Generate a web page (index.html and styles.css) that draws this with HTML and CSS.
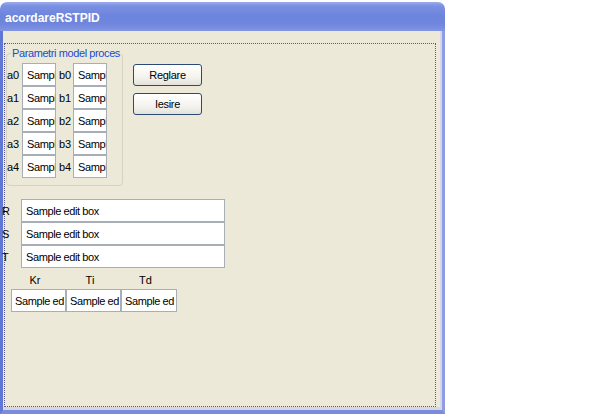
FILE: index.html
```html
<!DOCTYPE html>
<html>
<head>
<meta charset="utf-8">
<link rel="stylesheet" href="styles.css">
</head>
<body>
<div class="window">
  <div class="titlebar">acordareRSTPID</div>
  <div class="client">
    <div class="frame">
      <div class="top">
        <div class="group">
          <span class="legend">Parametri model proces</span>
          <div class="params">
            <span class="lbl">a0</span><div class="edit small">Sample</div><span class="lbl lb">b0</span><div class="edit small">Sample</div>
            <span class="lbl">a1</span><div class="edit small">Sample</div><span class="lbl lb">b1</span><div class="edit small">Sample</div>
            <span class="lbl">a2</span><div class="edit small">Sample</div><span class="lbl lb">b2</span><div class="edit small">Sample</div>
            <span class="lbl">a3</span><div class="edit small">Sample</div><span class="lbl lb">b3</span><div class="edit small">Sample</div>
            <span class="lbl">a4</span><div class="edit small">Sample</div><span class="lbl lb">b4</span><div class="edit small">Sample</div>
          </div>
        </div>
        <div class="buttons">
          <div class="btn">Reglare</div>
          <div class="btn">Iesire</div>
        </div>
      </div>
      <div class="rst">
        <span class="lbl">R</span><div class="edit wide">Sample edit box</div>
        <span class="lbl">S</span><div class="edit wide">Sample edit box</div>
        <span class="lbl">T</span><div class="edit wide">Sample edit box</div>
      </div>
      <div class="pid">
        <span class="plbl">Kr</span><span class="plbl">Ti</span><span class="plbl">Td</span>
        <div class="edit pbox">Sample ed</div><div class="edit pbox">Sample ed</div><div class="edit pbox">Sample ed</div>
      </div>
    </div>
  </div>
</div>
</body>
</html>
```
FILE: styles.css
```css
html, body {
  margin: 0;
  padding: 0;
  background: #ffffff;
}
body {
  font-family: "Liberation Sans", Arial, sans-serif;
  font-size: 11px;
  color: #000;
}
.window {
  margin-top: 2px;
  width: 445px;
  height: 412px;
  display: flex;
  flex-direction: column;
  border-radius: 7px 7px 0 0;
  overflow: hidden;
}
.titlebar {
  height: 29px;
  flex: none;
  box-sizing: border-box;
  padding: 8px 0 0 5px;
  color: #ffffff;
  font-weight: bold;
  font-size: 12px;
  line-height: 16px;
  background: linear-gradient(to bottom, #9aaced 0px, #7a90e2 4px, #6c84dc 14px, #6f86dd 22px, #8395e2 29px);
}
.client {
  flex: 1;
  display: flex;
  flex-direction: column;
  background: #ece9d8;
  border-left: 3px solid #6177d6;
  border-right: 3px solid #8f9de0;
  border-bottom: 4px solid #7b8cdc;
  box-shadow: inset -2px -3px 0 #d6d6ea;
  padding: 12px 6px 3px 1px;
}
.frame {
  flex: 1;
  border: 1px dotted #5c5a86;
  padding: 0;
}
.top {
  display: flex;
  align-items: flex-start;
  gap: 10px;
}
.group {
  position: relative;
  margin: 9px 0 0 1px;
  width: 117px;
  height: 133px;
  box-sizing: border-box;
  border: 1px solid #d5d2c0;
  border-radius: 4px;
  padding: 9px 0 0 0;
}
.legend {
  position: absolute;
  left: 4px;
  top: -7px;
  padding: 0 1px;
  background: #ece9d8;
  color: #1a4bd0;
  line-height: 13px;
  letter-spacing: -0.4px;
}
.params {
  display: grid;
  grid-template-columns: 15px 34px 17px 34px;
  grid-auto-rows: 23px;
}
.lbl {
  display: flex;
  align-items: center;
  letter-spacing: -0.2px;
}
.lb {
  padding-left: 3px;
}
.edit {
  box-sizing: border-box;
  background: #ffffff;
  border: 1px solid #a7aeb6;
  display: flex;
  align-items: center;
  white-space: nowrap;
  overflow: hidden;
  letter-spacing: -0.4px;
}
.small {
  width: 34px;
  height: 23px;
  padding-left: 4px;
}
.buttons {
  margin-top: 20px;
  display: flex;
  flex-direction: column;
  gap: 7px;
}
.btn {
  width: 69px;
  height: 22px;
  box-sizing: border-box;
  border: 1px solid #2b4a7a;
  border-radius: 3px;
  background: linear-gradient(to bottom, #ffffff 0%, #f4f3ee 60%, #e3e2da 100%);
  display: flex;
  align-items: center;
  justify-content: center;
  letter-spacing: -0.3px;
}
.rst {
  margin: 13px 0 0 -3px;
  display: grid;
  grid-template-columns: 19px 204px;
  grid-auto-rows: 23px;
}
.wide {
  height: 23px;
  padding-left: 4px;
}
.pid {
  margin: 6px 0 0 6px;
  display: grid;
  grid-template-columns: 55px 55px 56px;
  grid-template-rows: 13px 23px;
  row-gap: 2px;
}
.plbl {
  text-align: center;
  line-height: 13px;
  padding-right: 7px;
}
.pbox {
  height: 23px;
  padding-left: 3px;
}
```
